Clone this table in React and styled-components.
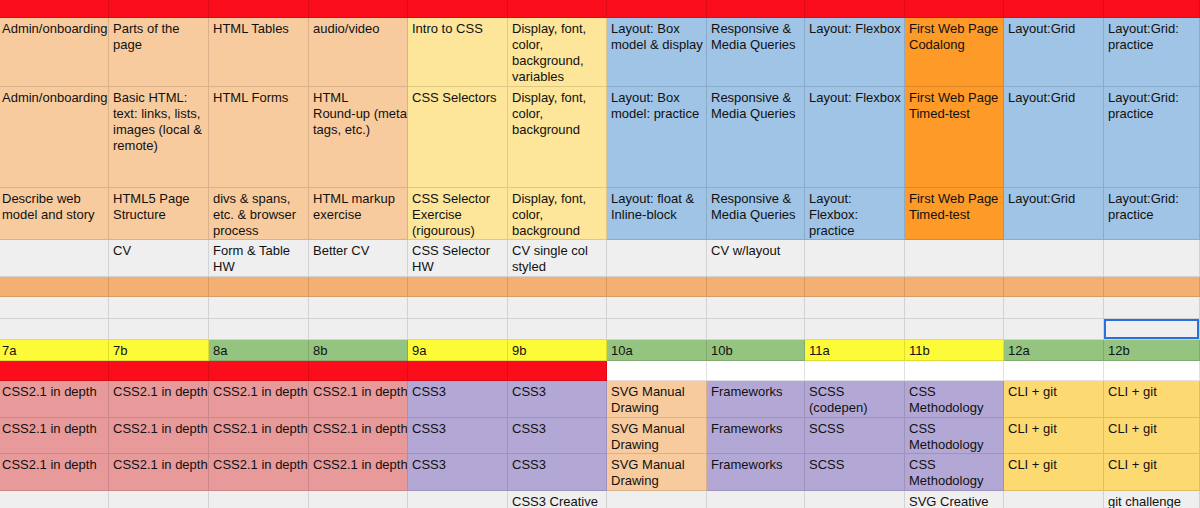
import React from 'react';
import styled, { createGlobalStyle } from 'styled-components';

const colors = {
  red: '#fc0d1b',
  peach: '#f8cb9f',
  cream: '#fde59a',
  blue: '#9fc4e5',
  orange: '#fd9a28',
  gray: '#efefef',
  tan: '#f4b072',
  yellow: '#fdfb38',
  green: '#94c47f',
  pink: '#e89a9a',
  purple: '#b3a8d5',
  gold: '#fdd972',
  white: '#ffffff',
};

const columns = '109px 100px 100px 99px 100px 99px 100px 98px 100px 99px 100px 1fr';

const fill = (n, bg, text = '') => Array.from({ length: n }, () => ({ bg, text }));

const week = (a, b, bg) => [
  { bg, text: a },
  { bg, text: b },
];

const practice = (scss) => [
  ...fill(4, 'pink', 'CSS2.1 in depth'),
  ...fill(2, 'purple', 'CSS3'),
  { bg: 'peach', text: 'SVG Manual\nDrawing' },
  { bg: 'purple', text: 'Frameworks' },
  { bg: 'purple', text: scss },
  { bg: 'purple', text: 'CSS\nMethodology' },
  ...fill(2, 'gold', 'CLI + git'),
];

const rows = [
  { height: 18, cells: fill(12, 'red') },
  {
    height: 69,
    cells: [
      { bg: 'peach', text: 'Admin/onboarding' },
      { bg: 'peach', text: 'Parts of the\npage' },
      { bg: 'peach', text: 'HTML Tables' },
      { bg: 'peach', text: 'audio/video' },
      { bg: 'cream', text: 'Intro to CSS' },
      { bg: 'cream', text: 'Display, font,\ncolor,\nbackground,\nvariables' },
      { bg: 'blue', text: 'Layout: Box\nmodel & display' },
      { bg: 'blue', text: 'Responsive &\nMedia Queries' },
      { bg: 'blue', text: 'Layout: Flexbox' },
      { bg: 'orange', text: 'First Web Page\nCodalong' },
      { bg: 'blue', text: 'Layout:Grid' },
      { bg: 'blue', text: 'Layout:Grid:\npractice' },
    ],
  },
  {
    height: 101,
    cells: [
      { bg: 'peach', text: 'Admin/onboarding' },
      { bg: 'peach', text: 'Basic HTML:\ntext: links, lists,\nimages (local &\nremote)' },
      { bg: 'peach', text: 'HTML Forms' },
      { bg: 'peach', text: 'HTML\nRound-up (meta\ntags, etc.)' },
      { bg: 'cream', text: 'CSS Selectors' },
      { bg: 'cream', text: 'Display, font,\ncolor,\nbackground' },
      { bg: 'blue', text: 'Layout: Box\nmodel: practice' },
      { bg: 'blue', text: 'Responsive &\nMedia Queries' },
      { bg: 'blue', text: 'Layout: Flexbox' },
      { bg: 'orange', text: 'First Web Page\nTimed-test' },
      { bg: 'blue', text: 'Layout:Grid' },
      { bg: 'blue', text: 'Layout:Grid:\npractice' },
    ],
  },
  {
    height: 52,
    cells: [
      { bg: 'peach', text: 'Describe web\nmodel and story' },
      { bg: 'peach', text: 'HTML5 Page\nStructure' },
      { bg: 'peach', text: 'divs & spans,\netc. & browser\nprocess' },
      { bg: 'peach', text: 'HTML markup\nexercise' },
      { bg: 'cream', text: 'CSS Selector\nExercise\n(rigourous)' },
      { bg: 'cream', text: 'Display, font,\ncolor,\nbackground' },
      { bg: 'blue', text: 'Layout: float &\nInline-block' },
      { bg: 'blue', text: 'Responsive &\nMedia Queries' },
      { bg: 'blue', text: 'Layout:\nFlexbox:\npractice' },
      { bg: 'orange', text: 'First Web Page\nTimed-test' },
      { bg: 'blue', text: 'Layout:Grid' },
      { bg: 'blue', text: 'Layout:Grid:\npractice' },
    ],
  },
  {
    height: 37,
    cells: ['', 'CV', 'Form & Table\nHW', 'Better CV', 'CSS Selector\nHW', 'CV single col\nstyled', '', 'CV w/layout', '', '', '', ''].map(
      (text) => ({ bg: 'gray', text })
    ),
  },
  { height: 20, cells: fill(12, 'tan') },
  { height: 22, cells: fill(12, 'gray') },
  { height: 21, cells: [...fill(11, 'gray'), { bg: 'gray', text: '', selected: true }] },
  {
    height: 21,
    cells: [
      ...week('7a', '7b', 'yellow'),
      ...week('8a', '8b', 'green'),
      ...week('9a', '9b', 'yellow'),
      ...week('10a', '10b', 'green'),
      ...week('11a', '11b', 'yellow'),
      ...week('12a', '12b', 'green'),
    ],
  },
  { height: 20, cells: [...fill(6, 'red'), ...fill(6, 'white')] },
  { height: 37, cells: practice('SCSS\n(codepen)') },
  { height: 36, cells: practice('SCSS') },
  { height: 37, cells: practice('SCSS') },
  {
    height: 37,
    cells: ['', '', '', '', '', 'CSS3 Creative', '', '', '', 'SVG Creative', '', 'git challenge'].map((text) => ({
      bg: 'gray',
      text,
    })),
  },
];

export default function App() {
  return (
    <>
      <GlobalStyle />
      <Sheet>
        {rows.map((row, r) => (
          <Row key={r} $height={row.height}>
            {row.cells.map((cell, c) => (
              <Cell key={c} $bg={colors[cell.bg]} $first={c === 0} $selected={cell.selected}>
                {cell.text}
              </Cell>
            ))}
          </Row>
        ))}
      </Sheet>
    </>
  );
}

const GlobalStyle = createGlobalStyle`
  html, body {
    margin: 0;
    padding: 0;
    background: #ffffff;
    overflow: hidden;
  }
`;

const Sheet = styled.div`
  width: 1200px;
  height: 508px;
  overflow: hidden;
  font-family: "Liberation Sans", Arial, sans-serif;
  font-size: 13px;
  line-height: 16px;
  color: #111111;
`;

const Row = styled.div`
  display: grid;
  grid-template-columns: ${columns};
  height: ${(p) => p.$height}px;
`;

const Cell = styled.div`
  background: ${(p) => p.$bg};
  border-right: 1px solid rgba(0, 0, 0, 0.12);
  border-bottom: 1px solid rgba(0, 0, 0, 0.12);
  padding: 3px ${(p) => (p.$first ? '2px' : '4px')} 0;
  white-space: pre;
  overflow: hidden;
  box-sizing: border-box;
  box-shadow: ${(p) => (p.$selected ? 'inset 0 0 0 2px #2a6fdb' : 'none')};
`;
